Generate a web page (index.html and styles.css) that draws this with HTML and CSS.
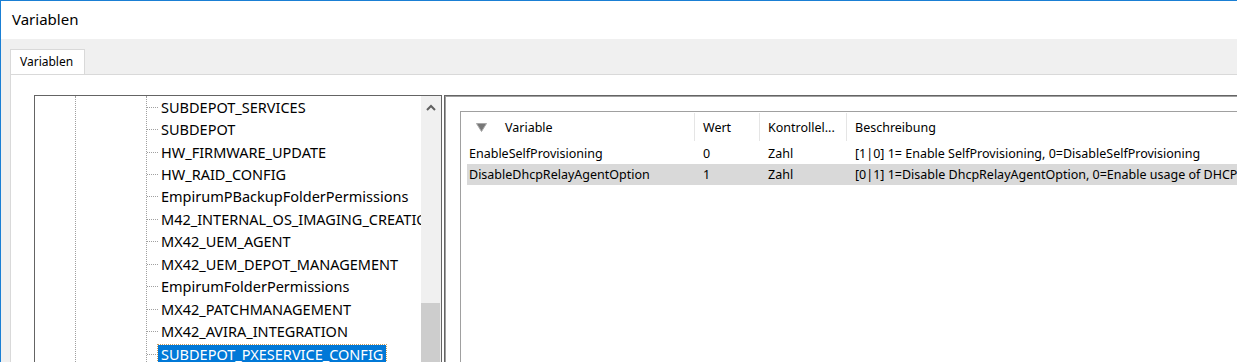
FILE: index.html
```html
<!DOCTYPE html>
<html lang="de">
<head>
  <meta charset="UTF-8">
  <title>Variablen</title>
  <link rel="stylesheet" href="styles.css">
</head>
<body>
  <div class="window">
    <div class="titlebar">Variablen</div>

    <div class="tabstrip">
      <div class="tab">Variablen</div>
    </div>

    <div class="tabpage">
      <!-- Baum links -->
      <div class="tree">
        <div class="guide guide-1"></div>
        <div class="guide guide-2"></div>
        <ul class="tree-items">
          <li><span class="label">SUBDEPOT_SERVICES</span></li>
          <li><span class="label">SUBDEPOT</span></li>
          <li><span class="label">HW_FIRMWARE_UPDATE</span></li>
          <li><span class="label">HW_RAID_CONFIG</span></li>
          <li><span class="label">EmpirumPBackupFolderPermissions</span></li>
          <li><span class="label">M42_INTERNAL_OS_IMAGING_CREATION</span></li>
          <li><span class="label">MX42_UEM_AGENT</span></li>
          <li><span class="label">MX42_UEM_DEPOT_MANAGEMENT</span></li>
          <li><span class="label">EmpirumFolderPermissions</span></li>
          <li><span class="label">MX42_PATCHMANAGEMENT</span></li>
          <li><span class="label">MX42_AVIRA_INTEGRATION</span></li>
          <li><span class="label selected">SUBDEPOT_PXESERVICE_CONFIG</span></li>
        </ul>
        <div class="vscroll">
          <div class="scroll-btn">
            <svg width="10" height="7" viewBox="0 0 10 7">
              <polyline points="1,6 5,2 9,6" fill="none" stroke="#606060" stroke-width="2"/>
            </svg>
          </div>
          <div class="thumb"></div>
        </div>
      </div>

      <!-- Variablenliste rechts -->
      <div class="detail">
        <div class="listview">
          <div class="lv-head">
            <div class="col col-name">
              <svg class="sort" width="11" height="9" viewBox="0 0 11 9">
                <polygon points="0.5,0.5 10.5,0.5 5.5,8.5" fill="#777" stroke="#a8a8a8" stroke-width="1"/>
              </svg>
              Variable
            </div>
            <div class="col col-value">Wert</div>
            <div class="col col-type">Kontrollel...</div>
            <div class="col col-desc">Beschreibung</div>
          </div>
          <div class="lv-row">
            <div class="col col-name">EnableSelfProvisioning</div>
            <div class="col col-value">0</div>
            <div class="col col-type">Zahl</div>
            <div class="col col-desc">[1|0] 1= Enable SelfProvisioning, 0=DisableSelfProvisioning</div>
          </div>
          <div class="lv-row active">
            <div class="col col-name">DisableDhcpRelayAgentOption</div>
            <div class="col col-value">1</div>
            <div class="col col-type">Zahl</div>
            <div class="col col-desc">[0|1] 1=Disable DhcpRelayAgentOption, 0=Enable usage of DHCP Relay Agent Option</div>
          </div>
        </div>
      </div>
    </div>
  </div>
</body>
</html>
```

FILE: styles.css
```css
html, body {
  margin: 0;
  padding: 0;
  overflow: hidden;
}
body {
  font-family: "Segoe UI", "Noto Sans", sans-serif;
  color: #000;
  background: #fff;
}
.window {
  height: 362px;
  width: 1237px;
  border-top: 1px solid #1a7fd4;
  border-left: 1px solid #1a7fd4;
  box-sizing: border-box;
  background: #f0f0f0;
  overflow: hidden;
  display: flex;
  flex-direction: column;
}
.titlebar {
  height: 38px;
  line-height: 36px;
  padding-left: 11px;
  font-size: 15px;
  background: #fff;
  flex: none;
}
.tabstrip {
  height: 35px;
  padding-left: 9px;
  display: flex;
  align-items: flex-end;
  flex: none;
}
.tab {
  width: 75px;
  height: 26px;
  margin-bottom: -1px;
  line-height: 24px;
  padding-left: 9px;
  box-sizing: border-box;
  font-size: 12px;
  background: #fff;
  border: 1px solid #d9d9d9;
  border-bottom: none;
}
.tabpage {
  flex: 1;
  margin-left: 9px;
  background: #fff;
  border-top: 1px solid #d9d9d9;
  border-left: 1px solid #d9d9d9;
  padding: 20px 0 0 23px;
  display: flex;
  align-items: flex-start;
  min-height: 0;
}

/* Baum */
.tree {
  width: 408px;
  height: 300px;
  box-sizing: border-box;
  border: 1px solid #646464;
  display: flex;
  flex: none;
}
.guide {
  flex: none;
  border-right: 1px dotted #a0a0a0;
}
.guide-1 { width: 40px; }
.guide-2 { width: 70px; }
.tree-items {
  list-style: none;
  margin: 0;
  padding: 0;
  flex: 1;
  min-width: 0;
  overflow: hidden;
  font-size: 14.5px;
}
.tree-items li {
  height: 22.45px;
  display: flex;
  align-items: center;
  white-space: nowrap;
}
.tree-items li::before {
  content: "";
  width: 11px;
  flex: none;
  border-top: 1px dotted #a0a0a0;
}
.label {
  padding: 0 3px;
  line-height: 19px;
}
.label.selected {
  background: #0078d7;
  color: #fff;
  outline: 1px dotted #c89a5a;
}
.vscroll {
  width: 20px;
  flex: none;
  background: #f0f0f0;
  display: flex;
  flex-direction: column;
}
.scroll-btn {
  height: 22px;
  display: flex;
  align-items: center;
  justify-content: center;
}
.thumb {
  margin-top: 185px;
  flex: 1;
  margin-right: 1px;
  background: #cdcdcd;
}

/* Liste */
.detail {
  flex: 1;
  margin-left: 2px;
  height: 300px;
  border-top: 1px solid #646464;
  border-left: 1px solid #646464;
  box-shadow: inset 1px 1px 0 #a0a0a0;
  padding: 15px 0 0 15px;
  min-width: 0;
}
.listview {
  height: 280px;
  border-top: 1px solid #a0a0a0;
  border-left: 1px solid #a0a0a0;
  font-size: 12.5px;
  white-space: nowrap;
}
.lv-head, .lv-row {
  display: flex;
}
.lv-head {
  height: 31px;
  align-items: stretch;
}
.lv-head .col {
  display: flex;
  align-items: center;
  border-right: 1px solid #e5e5e5;
  margin: 1px 0 2px;
}
.lv-head .col-desc {
  border-right: none;
}
.lv-row {
  height: 21px;
  line-height: 21px;
  margin-left: 6px;
}
.lv-row.active {
  background: #d9d9d9;
}
.col {
  box-sizing: border-box;
  padding-left: 8px;
  flex: none;
}
.col-name { width: 234px; }
.col-value { width: 65px; }
.col-type { width: 87px; }
.col-desc { flex: 1; }
.lv-row .col-name {
  width: 228px;
  padding-left: 2px;
}
.lv-head .col-name {
  padding-left: 15px;
}
.sort {
  margin-right: 18px;
}
```
